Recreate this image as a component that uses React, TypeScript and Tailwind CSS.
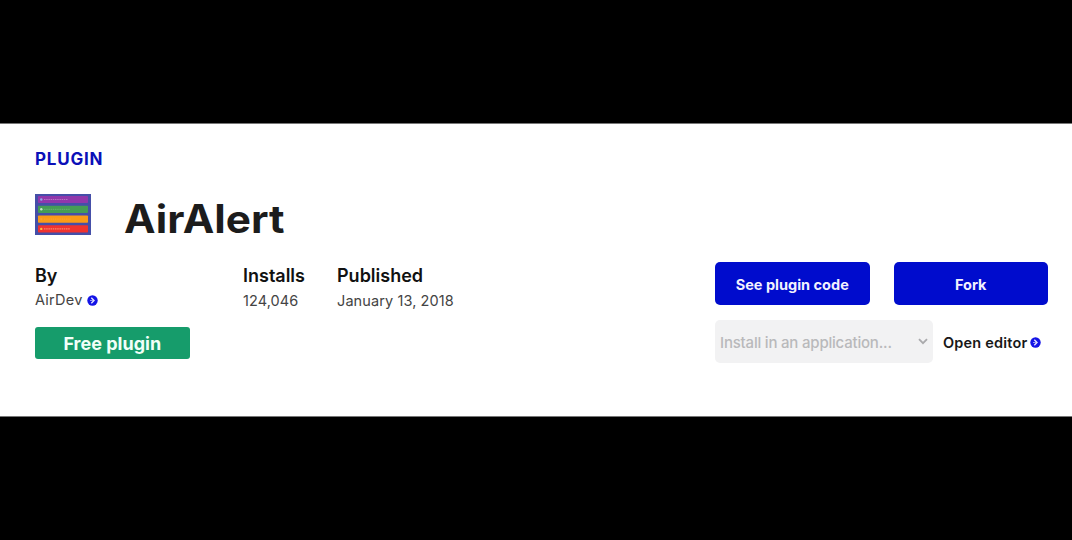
import type { ReactNode } from "react";
import { clsx } from "clsx";

interface PluginFactProps {
  label: string;
  className?: string;
  valueClassName?: string;
  children: ReactNode;
}

const ALERT_ROWS = [
  { fill: "#9137ab", mark: "#8fa8ee", text: "#b672c4", width: 27 },
  { fill: "#459d55", mark: "#c5e8ca", text: "#62ac6c", width: 29 },
  { fill: "#fb9b17", mark: "#fda42b", text: "#fda42b", width: 30 },
  { fill: "#f0332f", mark: "#f9c23c", text: "#f78c68", width: 29 },
];

function PluginIcon() {
  return (
    <svg width="56" height="41" viewBox="0 0 56 41" aria-hidden="true">
      <rect width="56" height="41" fill="#454fa8" />
      {ALERT_ROWS.map((row, i) => (
        <g key={row.fill} transform={`translate(3 ${1.9 + i * 9.8})`}>
          <rect width="50" height="7.2" rx="0.8" fill={row.fill} />
          <circle cx="3.3" cy="3.6" r="1.2" fill={row.mark} />
          <path
            d={`M6 3.6h${row.width - 3}`}
            stroke={row.text}
            strokeWidth="1.2"
            strokeDasharray="1.5 0.7"
          />
        </g>
      ))}
    </svg>
  );
}

function CircleArrow() {
  return (
    <svg
      width="11"
      height="11"
      viewBox="0 0 11 11"
      fill="none"
      className="shrink-0"
      aria-hidden="true"
    >
      <circle cx="5.5" cy="5.5" r="5.2" fill="#1414e6" />
      <path d="M4.3 2.8 7 5.5 4.3 8.2" stroke="#e4e4ff" strokeWidth="1.4" />
      <path d="M3 5.5h3" stroke="#a9a9fa" strokeWidth="0.9" />
    </svg>
  );
}

function PluginFact({
  label,
  className,
  valueClassName,
  children,
}: PluginFactProps) {
  return (
    <div className={className}>
      <dt className="text-[18px] leading-6 font-semibold text-[#111]">
        {label}
      </dt>
      <dd
        className={clsx(
          "flex items-center text-[14.5px] leading-6 tracking-[0.1px] text-[#444]",
          valueClassName,
        )}
      >
        {children}
      </dd>
    </div>
  );
}

function ActionButton({ children }: { children: ReactNode }) {
  return (
    <button
      type="button"
      className="h-[43px] w-[154.5px] rounded-[5px] bg-[#000ccd] pt-0.5 text-[14.5px] font-bold text-[#f2f2ff]"
    >
      {children}
    </button>
  );
}

export default function App() {
  return (
    <div className="flex h-[540px] w-[1072px] flex-col justify-center bg-black font-['Inter',sans-serif] whitespace-nowrap">
      <main className="h-[294px] border-y border-[#777] bg-white pt-[23px] pr-6 pl-[35px]">
        <p className="text-[17px] leading-6 font-bold tracking-[0.8px] text-[#0b10b8]">
          PLUGIN
        </p>
        <header className="mt-[23px] flex gap-[33px]">
          <PluginIcon />
          <h1 className="origin-left scale-x-[1.085] pt-px text-[39px] leading-[47px] font-bold text-[#1c1c1c]">
            AirAlert
          </h1>
        </header>

        <div className="mt-5 flex justify-between">
          <div className="pt-0.5">
            <dl className="flex">
              <PluginFact label="By" className="w-52">
                <span className="mr-1 tracking-[0.25px]">AirDev</span>
                <CircleArrow />
              </PluginFact>
              <PluginFact
                label="Installs"
                className="w-[94px]"
                valueClassName="pt-px"
              >
                124,046
              </PluginFact>
              <PluginFact label="Published" valueClassName="pt-px">
                January 13, 2018
              </PluginFact>
            </dl>
            <div className="mt-[14px] flex h-8 w-[154.5px] items-center justify-center rounded-[3px] bg-[#169c6b] text-[18px] font-bold text-[#f1fff8]">
              Free plugin
            </div>
          </div>

          <div className="w-[333px]">
            <div className="flex justify-between">
              <ActionButton>See plugin code</ActionButton>
              <ActionButton>Fork</ActionButton>
            </div>
            <div className="mt-[15px] flex items-center">
              <div className="relative">
                <select
                  disabled
                  className="h-[43px] w-[218px] appearance-none rounded-[5px] bg-[#f2f2f3] pt-[3px] pl-[5px] text-[15px] font-medium tracking-[-0.2px] text-[#b9b9bb]"
                >
                  <option>Install in an application...</option>
                </select>
                <svg
                  width="10"
                  height="7"
                  viewBox="0 0 10 7"
                  fill="none"
                  className="absolute top-[18px] right-[5px]"
                  aria-hidden="true"
                >
                  <path
                    d="m1 1.2 4 4 4-4"
                    stroke="#aaaaac"
                    strokeWidth="1.8"
                  />
                </svg>
              </div>
              <a className="ml-[10px] flex items-center gap-[3px] pt-0.5 text-[14.5px] font-semibold tracking-[0.2px] text-[#181818]">
                Open editor
                <CircleArrow />
              </a>
            </div>
          </div>
        </div>
      </main>
    </div>
  );
}
